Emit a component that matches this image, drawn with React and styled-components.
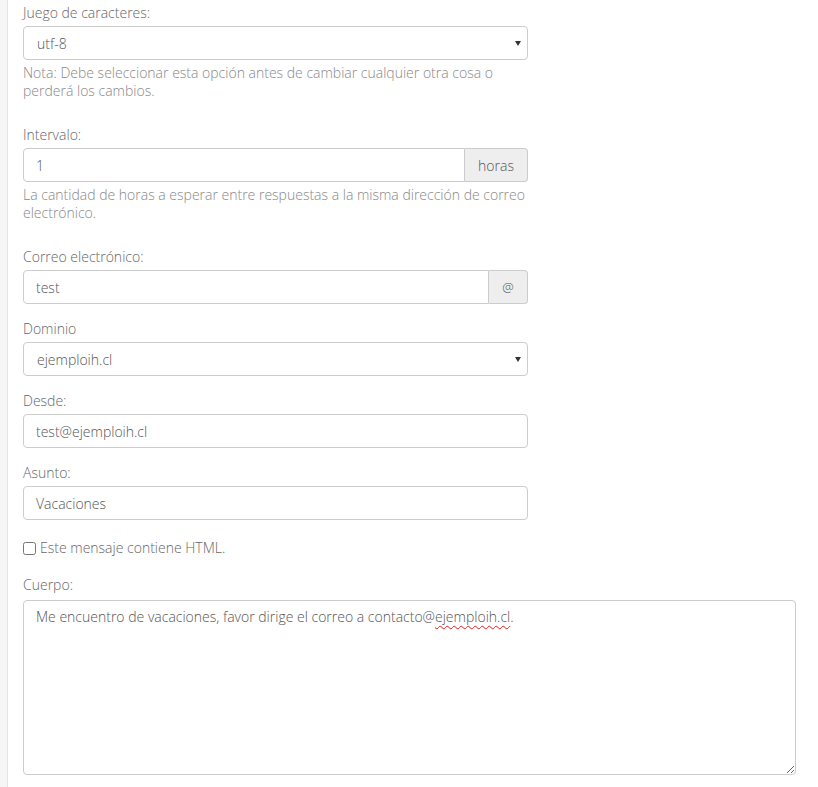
import styled, { createGlobalStyle } from "styled-components";

const GlobalStyle = createGlobalStyle`
    html, body {
        margin: 0;
        padding: 0;
        background: #fff;
    }
    body {
        font-family: 'Open Sans', 'Noto Sans', sans-serif;
        font-size: 14px;
        font-weight: 300;
        color: #555;
    }
    * {
        box-sizing: border-box;
    }
`;

export default function App(){
    return (
        <>
            <GlobalStyle />
            <Page>
                <Sidebar />
                <Main>
                    <FormGroup>
                        <Label>Juego de caracteres:</Label>
                        <SelectWrap>
                            <Select defaultValue="utf-8">
                                <option value="utf-8">utf-8</option>
                                <option value="iso-8859-1">iso-8859-1</option>
                            </Select>
                        </SelectWrap>
                        <Help>Nota: Debe seleccionar esta opción antes de cambiar cualquier otra cosa o perderá los cambios.</Help>
                    </FormGroup>

                    <FormGroup>
                        <Label>Intervalo:</Label>
                        <InputGroup>
                            <GroupInput defaultValue="1" />
                            <Addon width="63px">horas</Addon>
                        </InputGroup>
                        <Help>La cantidad de horas a esperar entre respuestas a la misma dirección de correo electrónico.</Help>
                    </FormGroup>

                    <FormGroup>
                        <Label>Correo electrónico:</Label>
                        <InputGroup>
                            <GroupInput defaultValue="test" />
                            <Addon width="39px" small>@</Addon>
                        </InputGroup>
                    </FormGroup>

                    <FormGroup>
                        <Label>Dominio</Label>
                        <SelectWrap>
                            <Select defaultValue="ejemploih.cl">
                                <option value="ejemploih.cl">ejemploih.cl</option>
                            </Select>
                        </SelectWrap>
                    </FormGroup>

                    <FormGroup>
                        <Label>Desde:</Label>
                        <Input defaultValue="test@ejemploih.cl" />
                    </FormGroup>

                    <FormGroup>
                        <Label>Asunto:</Label>
                        <Input defaultValue="Vacaciones" />
                    </FormGroup>

                    <CheckRow>
                        <input type="checkbox" />
                        Este mensaje contiene HTML.
                    </CheckRow>

                    <FormGroup>
                        <Label spaced>Cuerpo:</Label>
                        <Body>
                            Me encuentro de vacaciones, favor dirige el correo a contacto@<Misspelled>ejemploih.cl</Misspelled>.
                        </Body>
                    </FormGroup>
                </Main>
            </Page>
        </>
    )
}

const Page = styled.div`
    display: flex;
    min-height: 100vh;
`

const Sidebar = styled.div`
    width: 8px;
    flex-shrink: 0;
    background-color: #f6f6f6;
    border-right: 1px solid #e4e4e4;
`

const Main = styled.div`
    flex: 1;
    padding: 3px 22px 0 15px;
`

const FormGroup = styled.div`
    margin-bottom: 15px;
`

const Label = styled.label`
    display: block;
    line-height: 20px;
    margin-bottom: ${p => p.spaced ? "5px" : "3px"};
    color: #666;
`

const Help = styled.p`
    width: 505px;
    margin: 4px 0 25px;
    line-height: 18px;
    color: #888;
`

const fieldBase = `
    height: 34px;
    border: 1px solid #ccc;
    background-color: #fff;
    font-family: 'Open Sans', 'Noto Sans', sans-serif;
    font-size: 14px;
    font-weight: 300;
    color: #555;
    outline: none;
`

const Input = styled.input`
    ${fieldBase}
    display: block;
    width: 505px;
    padding: 6px 12px;
    border-radius: 4px;
`

const InputGroup = styled.div`
    display: flex;
    width: 505px;
`

const GroupInput = styled.input`
    ${fieldBase}
    flex: 1;
    min-width: 0;
    padding: 6px 12px;
    border-radius: 4px 0 0 4px;
`

const Addon = styled.span`
    display: flex;
    align-items: center;
    justify-content: center;
    width: ${p => p.width};
    height: 34px;
    border: 1px solid #ccc;
    border-left: none;
    border-radius: 0 4px 4px 0;
    background-color: #eee;
    font-size: ${p => p.small ? "13px" : "14px"};
    color: #555;
`

const SelectWrap = styled.div`
    position: relative;
    width: 505px;
    &::after{
        content: "";
        position: absolute;
        right: 7px;
        top: 15px;
        border-left: 3px solid transparent;
        border-right: 3px solid transparent;
        border-top: 5px solid #333;
        pointer-events: none;
    }
`

const Select = styled.select`
    ${fieldBase}
    display: block;
    width: 100%;
    padding: 6px 12px 6px 13px;
    border-radius: 4px;
    appearance: none;
    -webkit-appearance: none;
`

const CheckRow = styled.label`
    display: flex;
    align-items: center;
    gap: 4px;
    margin: 18px 0 17px;
    line-height: 20px;
    color: #666;
    input{
        margin: 0;
        width: 13px;
        height: 13px;
    }
`

const Body = styled.div`
    width: 100%;
    height: 175px;
    padding: 6px 12px;
    border: 1px solid #ccc;
    border-radius: 4px;
    line-height: 20px;
    color: #555;
    overflow: auto;
    resize: vertical;
`

const Misspelled = styled.span`
    text-decoration: underline wavy #e02020;
    text-decoration-thickness: 1px;
    text-underline-offset: 3px;
`
